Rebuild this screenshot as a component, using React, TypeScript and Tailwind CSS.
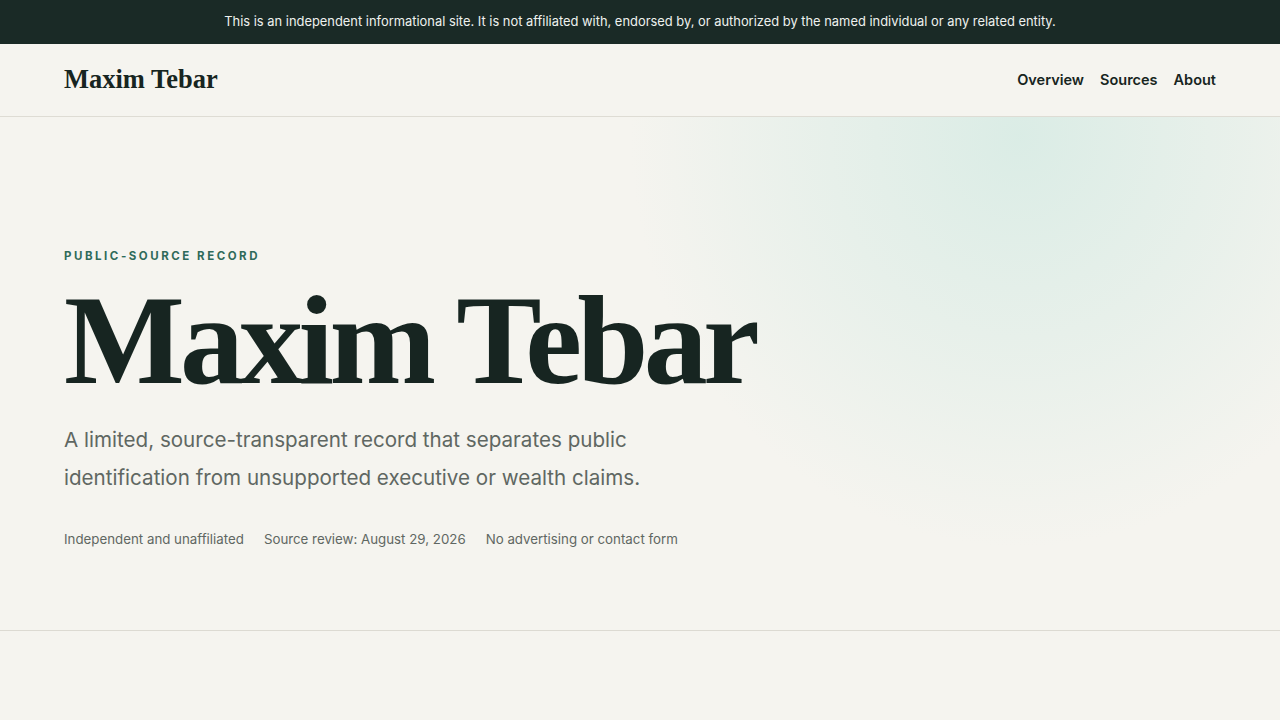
import React from "react";

export default function App() {
  const sans = { fontFamily: "Inter, 'Noto Sans', sans-serif" };
  return (
    <div className="min-h-[720px] bg-[#f5f4ef] text-[#172521]" style={sans}>
      <div className="h-11 bg-[#1a2a26] flex items-center justify-center text-[12.9px] text-[#eef1ee]">
        This is an independent informational site. It is not affiliated with, endorsed by, or authorized by the named individual or any related entity.
      </div>
      <header className="h-[73px] border-b border-[#dedcd4] flex items-center justify-between px-16">
        <div className="text-[26.5px] font-bold text-[#172521]" style={{ fontFamily: "'Liberation Serif', serif" }}>
          Maxim Tebar
        </div>
        <nav className="flex gap-4 text-[14.5px] font-semibold text-[#172521]">
          <span>Overview</span>
          <span>Sources</span>
          <span>About</span>
        </nav>
      </header>
      <section className="relative overflow-hidden h-[514px] border-b border-[#dcdad2]">
        <div className="absolute inset-0 bg-[radial-gradient(ellipse_390px_410px_at_1020px_20px,rgba(214,235,228,0.85),rgba(214,235,228,0.4)_55%,rgba(245,244,239,0)_100%)]" />
        <div className="relative px-16 pt-[131px]">
          <div className="text-[11.5px] leading-4 font-bold tracking-[0.22em] text-[#2f6b5a]">PUBLIC-SOURCE RECORD</div>
          <h1
            className="mt-3 text-[128px] leading-none font-bold tracking-[-0.037em] text-[#172521]"
            style={{ fontFamily: "'Liberation Serif', serif" }}
          >
            Maxim Tebar
          </h1>
          <p className="mt-[17px] max-w-[620px] text-[20.6px] leading-[38px] text-[#5f6762]">
            A limited, source-transparent record that separates public identification from unsupported executive or wealth claims.
          </p>
          <div className="mt-8 flex gap-5 text-[13.3px] leading-5 text-[#5f6762]">
            <span>Independent and unaffiliated</span>
            <span>Source review: August 29, 2026</span>
            <span>No advertising or contact form</span>
          </div>
        </div>
      </section>
    </div>
  );
}
